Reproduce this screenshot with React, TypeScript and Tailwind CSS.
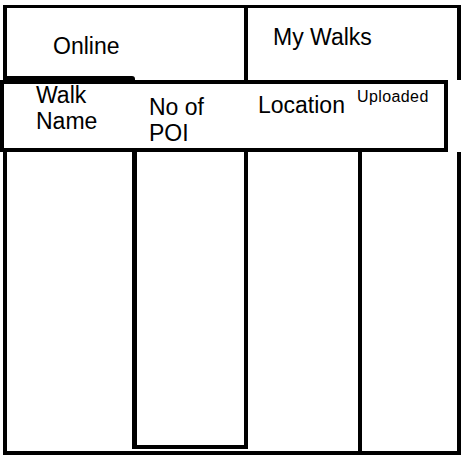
/**
 * Wireframe: Online / My Walks tabs over a four-column walk table.
 */

const HEADERS = [
    { label: 'Walk\nName', cell: 'w-[128px] pl-[32px] -mt-[2px]', text: 'text-[23px] leading-[26px]' },
    { label: 'No of\nPOI', cell: 'w-[112px] pl-[17px] pt-[10px]', text: 'text-[23px] leading-[26px]' },
    { label: 'Location', cell: 'w-[112px] pl-[14px] pt-[8px]', text: 'text-[23px] leading-[26px]' },
    { label: 'Uploaded', cell: 'flex-1 pl-[1px] pt-[4px]', text: 'text-[16px] leading-[18px] tracking-[0.4px]' },
];

export default function App() {
    return (
        <div className="w-[465px] h-[460px] bg-white text-black pt-[5px] font-['Liberation_Sans',Arial,sans-serif]">
            {/* tabs */}
            <div className="ml-[3px] w-[458px] h-[75px] flex border-x-4 border-t-[3px] border-black">
                <div className="w-[237px] flex flex-col">
                    <span className="pl-[46px] pt-[25px] text-[23px] leading-[26px]">Online</span>
                    <div className="mt-auto w-[128px] h-[4px] bg-black rounded-tr-[3px]" />
                </div>
                <div className="flex-1 border-l-4 border-black pl-[25px] pt-[16px]">
                    <span className="text-[23px] leading-[26px]">My Walks</span>
                </div>
            </div>

            {/* column headers */}
            <div className="w-[448px] h-[72px] border-4 border-black flex">
                {HEADERS.map(({ label, cell, text }) => (
                    <div key={label} className={cell}>
                        <p className={`${text} whitespace-pre-line`}>{label}</p>
                    </div>
                ))}
            </div>

            {/* table body */}
            <div className="ml-[3px] w-[458px] h-[303px] flex items-start border-x-4 border-b-4 border-black">
                <div className="w-[125px] h-full" />
                <div className="w-[116px] h-[297px] border-l-[5px] border-r-4 border-b-4 border-black" />
                <div className="w-[110px] h-full" />
                <div className="flex-1 h-full border-l-4 border-black" />
            </div>
        </div>
    );
}
